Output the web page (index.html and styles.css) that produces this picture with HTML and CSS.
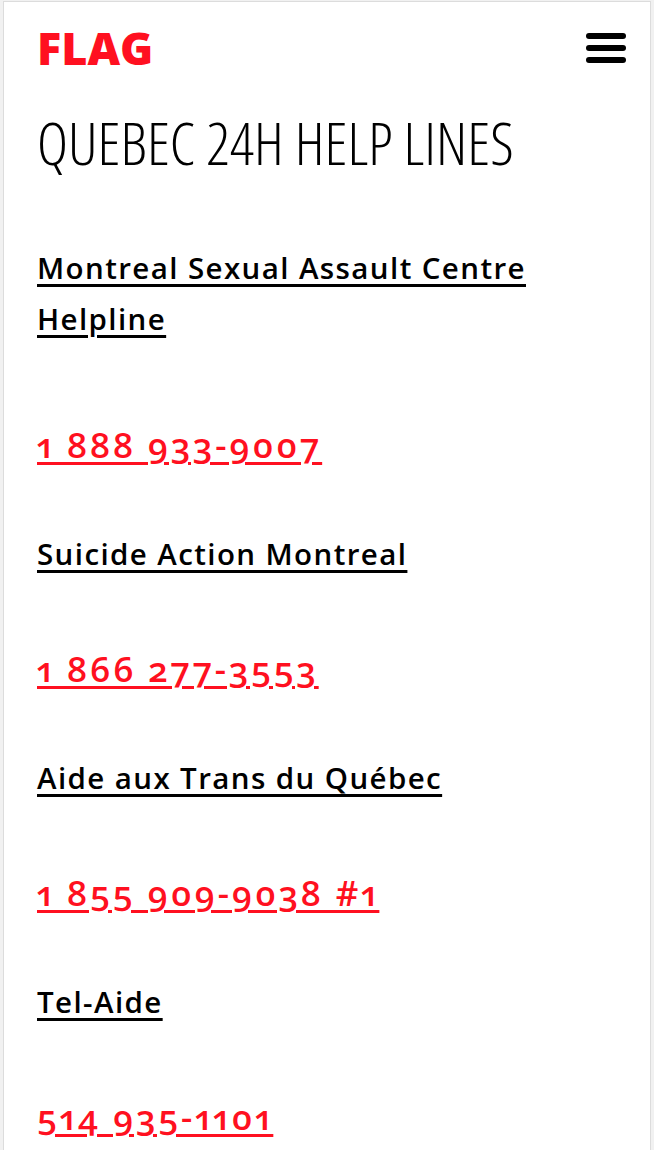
FILE: index.html
```html
<!DOCTYPE html>
<html lang="en">
<head>
<meta charset="utf-8">
<title>Quebec 24h Help Lines - FLAG</title>
<link rel="stylesheet" href="styles.css">
</head>
<body>
<div class="page">
  <header class="header">
    <a class="logo" href="#">FLAG</a>
    <button class="menu" aria-label="Menu">
      <svg width="40" height="30" viewBox="0 0 40 30"><rect x="0" y="0" width="40" height="6" rx="3"/><rect x="0" y="12" width="40" height="6" rx="3"/><rect x="0" y="24" width="40" height="6" rx="3"/></svg>
    </button>
  </header>
  <main class="content">
    <h1 class="title">QUEBEC 24H HELP LINES</h1>
    <p class="name"><a href="#">Montreal Sexual Assault Centre Helpline</a></p>
    <p class="phone phone-first"><a href="#">1 888 933-9007</a></p>
    <p class="name"><a href="#">Suicide Action Montreal</a></p>
    <p class="phone"><a href="#">1 866 277-3553</a></p>
    <p class="name"><a href="#">Aide aux Trans du Québec</a></p>
    <p class="phone"><a href="#">1 855 909-9038 #1</a></p>
    <p class="name"><a href="#">Tel-Aide</a></p>
    <p class="phone"><a href="#">514 935-1101</a></p>
  </main>
</div>
</body>
</html>
```
FILE: styles.css
```css
html, body {
  margin: 0;
  padding: 0;
}
body {
  background: #f1f1f1;
  font-family: "Open Sans", "Lato", sans-serif;
  overflow: hidden;
}
.page {
  margin: 1px 3px 0 3px;
  border: 1px solid #dcdcdc;
  border-bottom: none;
  background: #fff;
  min-height: 1160px;
}
.header {
  display: flex;
  justify-content: space-between;
  align-items: center;
  padding: 23px 24px 0 33px;
  height: 45px;
}
.logo {
  font-family: "Open Sans", sans-serif;
  font-weight: 800;
  font-size: 45px;
  line-height: 1;
  color: #ff1020;
  text-decoration: none;
  letter-spacing: 0;
}
.menu {
  border: 0;
  padding: 0;
  margin: 0;
  background: none;
  display: block;
  width: 40px;
  height: 30px;
}
.menu svg {
  display: block;
  fill: #000;
}
.content {
  padding: 0 24px 0 33px;
}
.title {
  margin: 37px 0 0 0;
  font-family: "Open Sans", sans-serif;
  font-weight: 300;
  font-stretch: 75%;
  font-size: 59px;
  line-height: 71px;
  color: #000;
  letter-spacing: 0;
}
.name, .phone {
  margin: 0;
  font-weight: 600;
  line-height: 51px;
}
.name {
  margin-top: 58px;
  padding-right: 40px;
  font-size: 29.5px;
  letter-spacing: 1.4px;
}
.title + .name {
  margin-top: 64px;
}
.name a {
  color: #000;
  text-decoration: underline;
  text-decoration-thickness: 3px;
  text-underline-offset: 5px;
}
.phone {
  margin-top: 64px;
  font-size: 35px;
  font-weight: 650;
  letter-spacing: 2.9px;
  font-feature-settings: "onum" 1, "pnum" 1;
}
.phone-first {
  margin-top: 75px;
}
.phone a {
  color: #ff1020;
  text-decoration: underline;
  text-decoration-thickness: 3px;
  text-underline-offset: 4px;
}
```
